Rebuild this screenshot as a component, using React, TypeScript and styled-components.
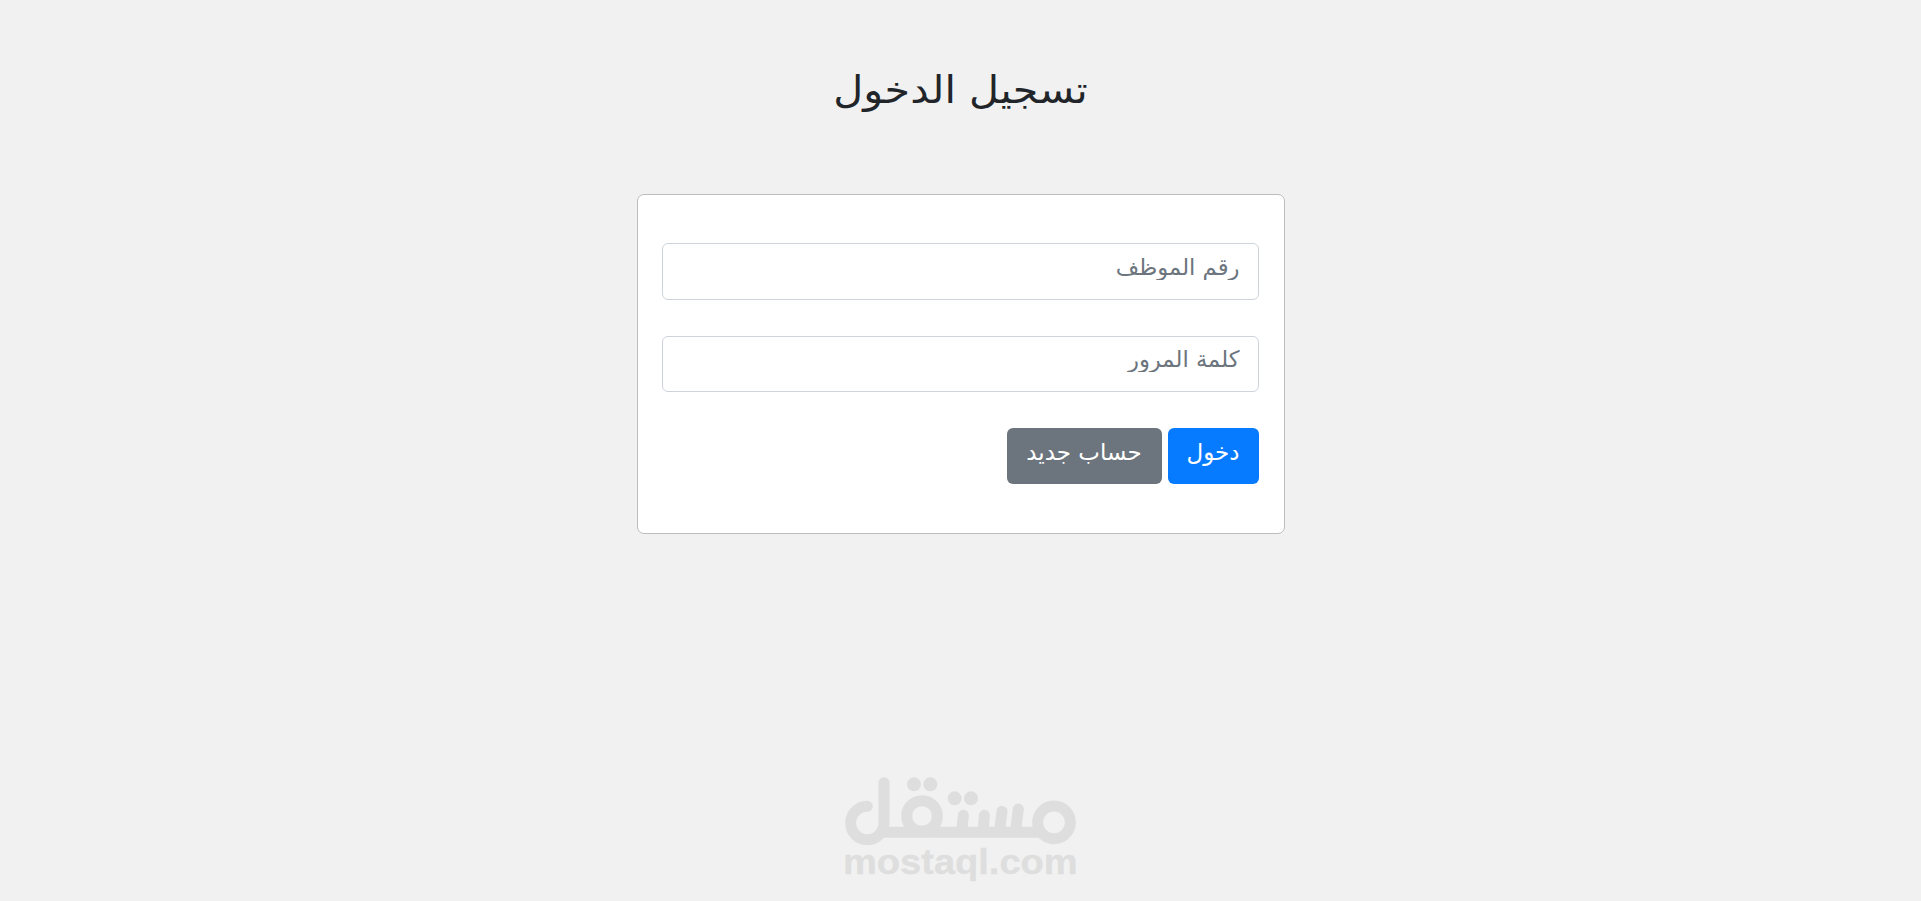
import React, { useState } from 'react';
import styled, { createGlobalStyle } from 'styled-components';

const GlobalStyle = createGlobalStyle`
    * {
        box-sizing: border-box;
    }

    body {
        margin: 0;
        background-color: #f1f1f1;
        color: #212529;
        font-family: 'DejaVu Sans', sans-serif;
        overflow: hidden;
    }
`;

const LoginPageStyledMain = styled.main`
    display: flex;
    flex-direction: column;
    align-items: center;
    height: 901px;
`;

const Title = styled.h1`
    margin: 66px 0 80px;
    height: 48px;
    font-size: 41.3px;
    font-weight: 400;
    line-height: 48px;
    white-space: nowrap;
    transform: scaleY(0.91);
`;

const LoginForm = styled.form`
    display: flex;
    flex-direction: column;
    gap: 36px;
    width: 648px;
    height: 340px;
    padding: 48.2px 25px 0 24px;
    background-color: #fff;
    border: 1px solid #bdbdbd;
    border-radius: 7px;
`;

const Field = styled.input`
    width: 597px;
    height: 56.5px;
    padding: 0 18px 9px;
    background-color: #fff;
    border: 1px solid #ced4da;
    border-radius: 6px;
    color: #495057;
    font-family: inherit;
    font-size: 22.7px;
    line-height: 40px;
    outline: none;

    &::placeholder {
        color: #6c757d;
        line-height: 40px;
        opacity: 1;
    }
`;

const Actions = styled.div`
    display: flex;
    gap: 6px;
`;

const Button = styled.button<{ $color: string; $width: number }>`
    width: ${({ $width }) => $width}px;
    height: 56px;
    padding: 0 0 9px;
    background-color: ${({ $color }) => $color};
    border: 0;
    border-radius: 6px;
    color: #fff;
    font-family: inherit;
    font-size: 23px;
    white-space: nowrap;
    cursor: pointer;
`;

const Brand = styled.footer`
    display: flex;
    margin-top: 231px;
    padding-right: 2px;

    text {
        font-family: 'Liberation Sans', Arial, sans-serif;
        font-weight: 700;
    }
`;

const MostaqlLogo = () => (
    <svg width="260" height="125" viewBox="0 0 780 375" direction="ltr" aria-label="mostaql.com">
        <g fill="none" stroke="#dedede" strokeWidth="33" strokeLinecap="round">
            <path d="M112 124A50 50 0 1 0 162 174V53" />
            <path d="M150 202H636" strokeLinecap="butt" />
            <circle cx="276" cy="153" r="46" />
            <circle cx="672" cy="172" r="49" />
            <path d="M400 151L395 202M463 151L459 202M516 139L508 202M565 132L556 202" />
        </g>
        <g fill="#dedede">
            <circle cx="252" cy="58" r="21" />
            <circle cx="301" cy="58" r="21" />
            <circle cx="374" cy="100" r="21" />
            <circle cx="423" cy="100" r="21" />
            <text
                x="39"
                y="328"
                fontSize="107"
                stroke="#dedede"
                strokeWidth="1"
                strokeLinejoin="round"
                textLength="704"
                lengthAdjust="spacingAndGlyphs"
            >
                mostaql.com
            </text>
        </g>
    </svg>
);

const App = () => {
    const [values, setValues] = useState({ employee: '', password: '' });

    const onChangeHandler = (e: React.ChangeEvent<HTMLInputElement>) => {
        setValues({ ...values, [e.target.name]: e.target.value });
    };

    return (
        <LoginPageStyledMain dir={'rtl'} lang={'ar'}>
            <GlobalStyle />
            <Title>تسجيل الدخول</Title>
            <LoginForm onSubmit={e => e.preventDefault()}>
                <Field
                    name={'employee'}
                    placeholder={'رقم الموظف'}
                    value={values.employee}
                    onChange={onChangeHandler}
                />
                <Field
                    name={'password'}
                    type={'password'}
                    placeholder={'كلمة المرور'}
                    value={values.password}
                    onChange={onChangeHandler}
                />
                <Actions>
                    <Button type={'submit'} $color={'#077bff'} $width={91}>
                        دخول
                    </Button>
                    <Button type={'button'} $color={'#6c757d'} $width={155}>
                        حساب جديد
                    </Button>
                </Actions>
            </LoginForm>
            <Brand>
                <MostaqlLogo />
            </Brand>
        </LoginPageStyledMain>
    );
};

export default App;
